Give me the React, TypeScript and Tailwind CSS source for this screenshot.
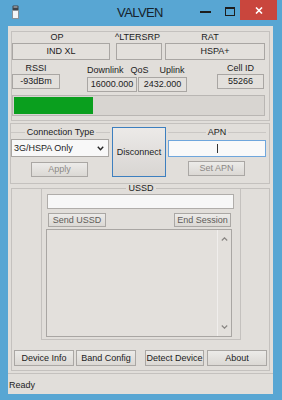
import React from "react";

const font = "font-['Liberation_Sans',Arial,sans-serif]";

function Field({ className = "", children }: { className?: string; children?: React.ReactNode }) {
  return (
    <div
      className={`flex items-center justify-center border border-[#a9a6a3] bg-[#e3e0dc] text-[9px] leading-none text-[#1c1c1c] ${className}`}
    >
      {children}
    </div>
  );
}

function Btn({
  className = "",
  children,
  text = "text-[#1c1c1c]",
}: {
  className?: string;
  children?: React.ReactNode;
  text?: string;
}) {
  return (
    <div
      className={`flex items-center justify-center border border-[#aaa7a4] bg-linear-to-b from-[#ecebe9] to-[#dbd8d4] text-[9px] leading-none ${text} ${className}`}
    >
      {children}
    </div>
  );
}

function GroupTitle({ label }: { label: string }) {
  return (
    <div className="flex h-[11px] items-center gap-[2px]">
      <div className="h-px flex-1 bg-[#cac7c4]" />
      <span className="text-[9px] leading-none text-[#1c1c1c]">{label}</span>
      <div className="h-px flex-1 bg-[#cac7c4]" />
    </div>
  );
}

export default function App() {
  return (
    <div className={`flex h-[400px] w-[282px] flex-col bg-[#58a6d3] ${font} text-[#1c1c1c]`}>
      {/* Title bar */}
      <div className="flex h-[26px] items-start">
        <div className="w-[100px]">
          <svg className="ml-[12px] mt-[5px]" width="7" height="14" viewBox="0 0 7 14">
            <rect x="0.5" y="0.5" width="6" height="5" rx="1" fill="#3e4348" />
            <rect x="1.5" y="1.5" width="4" height="1" fill="#c9ced3" />
            <rect x="0.5" y="5.5" width="6" height="8" fill="#f4f6f8" stroke="#8a9299" />
          </svg>
        </div>
        <div className="mt-[6px] flex-1 text-center text-[13px] leading-[13px] tracking-[-0.6px] text-[#16222b]">
          VALVEN
        </div>
        <div className="flex w-[102px] items-start">
          <div className="ml-[20px] mt-[11px] h-[2px] w-[11px] bg-[#1d1d1d]" />
          <div className="ml-[14px] mt-[7px] h-[9px] w-[10px] border border-t-2 border-[#1d1d1d]" />
          <div className="ml-[5px] flex h-[20px] w-[37px] items-center justify-center bg-[#c9463d]">
            <svg width="8" height="7" viewBox="0 0 8 7">
              <path d="M1 0.5 L7 6.5 M7 0.5 L1 6.5" stroke="#ffffff" strokeWidth="1.6" />
            </svg>
          </div>
        </div>
      </div>

      {/* Client area */}
      <div className="ml-[8px] flex h-[368px] w-[265px] flex-col bg-[#e1deda]">
        {/* Group 1 */}
        <div className="ml-[3px] mt-[5px] flex h-[90px] w-[259px] flex-col border border-[#c4c1be]">
          <div className="flex h-[11px] items-center text-[9px] leading-none">
            <div className="w-[98px] pr-[8px] text-center">OP</div>
            <div className="w-[55px] text-center">^LTERSRP</div>
            <div className="w-[100px] pr-[10px] text-center">RAT</div>
          </div>
          <div className="flex h-[17px]">
            <Field className="w-[98px]">IND XL</Field>
            <Field className="ml-[6px] w-[46px]" />
            <Field className="ml-[3px] w-[100px]">HSPA+</Field>
          </div>
          <div className="mt-[2px] flex items-start">
            <div className="flex w-[48px] flex-col">
              <div className="h-[12px] text-center text-[9px] leading-[12px]">RSSI</div>
              <Field className="h-[15px]">-93dBm</Field>
            </div>
            <div className="ml-[27px] flex w-[100px] flex-col">
              <div className="flex h-[15px] items-center pt-[1px] text-[9px] leading-none">
                <span>Downlink</span>
                <span className="ml-[7px]">QoS</span>
                <span className="ml-[11px]">Uplink</span>
              </div>
              <div className="flex h-[15px]">
                <Field className="w-[50px]">16000.000</Field>
                <Field className="ml-[1px] w-[49px]">2432.000</Field>
              </div>
            </div>
            <div className="ml-[30px] flex w-[47px] flex-col">
              <div className="h-[12px] text-center text-[9px] leading-[12px]">Cell ID</div>
              <Field className="h-[15px]">55266</Field>
            </div>
          </div>
          <div className="mt-[3px] h-[21px] w-[253px] border border-[#b9b6b3] bg-[#d8d5d1] p-px">
            <div className="h-full w-[79px] bg-[#0a9f1e]" />
          </div>
        </div>

        {/* Group 2 */}
        <div className="ml-[2px] mt-[2px] flex h-[61px] w-[260px] items-start border border-[#c4c1be]">
          <div className="flex w-[99px] flex-col">
            <div className="mt-[3px]">
              <GroupTitle label="Connection Type" />
            </div>
            <div className="mt-[1px] flex h-[18px] w-[98px] items-center border border-[#a9a6a3] bg-[#f8f8f8] pl-[2px] text-[9px] leading-none">
              <span className="flex-1">3G/HSPA Only</span>
              <svg className="mr-[4px]" width="7" height="5" viewBox="0 0 7 5">
                <path d="M0.8 0.8 L3.5 3.8 L6.2 0.8" fill="none" stroke="#262626" strokeWidth="1.4" />
              </svg>
            </div>
            <Btn className="ml-[20px] mt-[5px] h-[15px] w-[57px]" text="text-[#8c8986]">
              Apply
            </Btn>
          </div>
          <div className="ml-[2px] mt-[3px] flex h-[50px] w-[54px] items-center justify-center border border-[#3d7fbf] bg-linear-to-b from-[#eceae8] to-[#d8d5d2] text-[9px] leading-none">
            Disconnect
          </div>
          <div className="ml-[2px] flex w-[98px] flex-col">
            <div className="mt-[3px]">
              <GroupTitle label="APN" />
            </div>
            <div className="mt-[2px] flex h-[17px] items-center border border-[#6fa6dc] bg-[#f9f9f9] pl-[48px]">
              <div className="h-[9px] w-px bg-[#333333]" />
            </div>
            <Btn className="ml-[20px] mt-[4px] h-[15px] w-[57px]" text="text-[#8c8986]">
              Set APN
            </Btn>
          </div>
        </div>

        {/* USSD area */}
        <div className="ml-[3px] mt-[4px] flex h-[183px] w-[259px] flex-col border border-[#c4c1be]">
          <div className="-mt-px ml-[29px] flex h-[152px] w-[200px] flex-col border-x border-b border-[#c4c1be]">
            <div className="-mt-[4px] flex h-[9px] items-center justify-center">
              <span className="bg-[#e1deda] px-[2px] text-[9px] leading-none">USSD</span>
            </div>
            <div className="ml-[5px] mt-[1px] h-[15px] w-[187px] border border-[#b0adaa] bg-[#f7f7f7]" />
            <div className="mt-[4px] flex h-[14px]">
              <Btn className="ml-[6px] w-[58px]" text="text-[#5f5c59]">
                Send USSD
              </Btn>
              <Btn className="ml-[68px] w-[57px]" text="text-[#5f5c59]">
                End Session
              </Btn>
            </div>
            <div className="ml-[4px] mt-[2px] flex h-[108px] w-[186px] border border-[#a9a6a3] bg-[#e3e0dc]">
              <div className="flex-1" />
              <div className="flex w-[14px] flex-col items-center justify-between border-l border-[#f0eeec] py-[7px]">
                <svg width="7" height="4" viewBox="0 0 7 4">
                  <path d="M0.8 3.5 L3.5 0.8 L6.2 3.5" fill="none" stroke="#8a8784" strokeWidth="1.2" />
                </svg>
                <svg width="7" height="4" viewBox="0 0 7 4">
                  <path d="M0.8 0.5 L3.5 3.2 L6.2 0.5" fill="none" stroke="#8a8784" strokeWidth="1.2" />
                </svg>
              </div>
            </div>
          </div>
          <div className="mt-[10px] flex h-[16px]">
            <Btn className="ml-[2px] w-[60px] border-[#9e9b98]">Device Info</Btn>
            <Btn className="ml-[2px] w-[60px] border-[#9e9b98]">Band Config</Btn>
            <Btn className="ml-[9px] w-[59px] border-[#9e9b98]">Detect Device</Btn>
            <Btn className="ml-[3px] w-[60px] border-[#9e9b98]">About</Btn>
          </div>
        </div>

        {/* Status bar */}
        <div className="mt-[2px] flex h-[21px] items-center border-t border-[#c4c1be] pl-[1px] pt-[3px] text-[9px] leading-none">
          Ready
        </div>
      </div>
    </div>
  );
}
